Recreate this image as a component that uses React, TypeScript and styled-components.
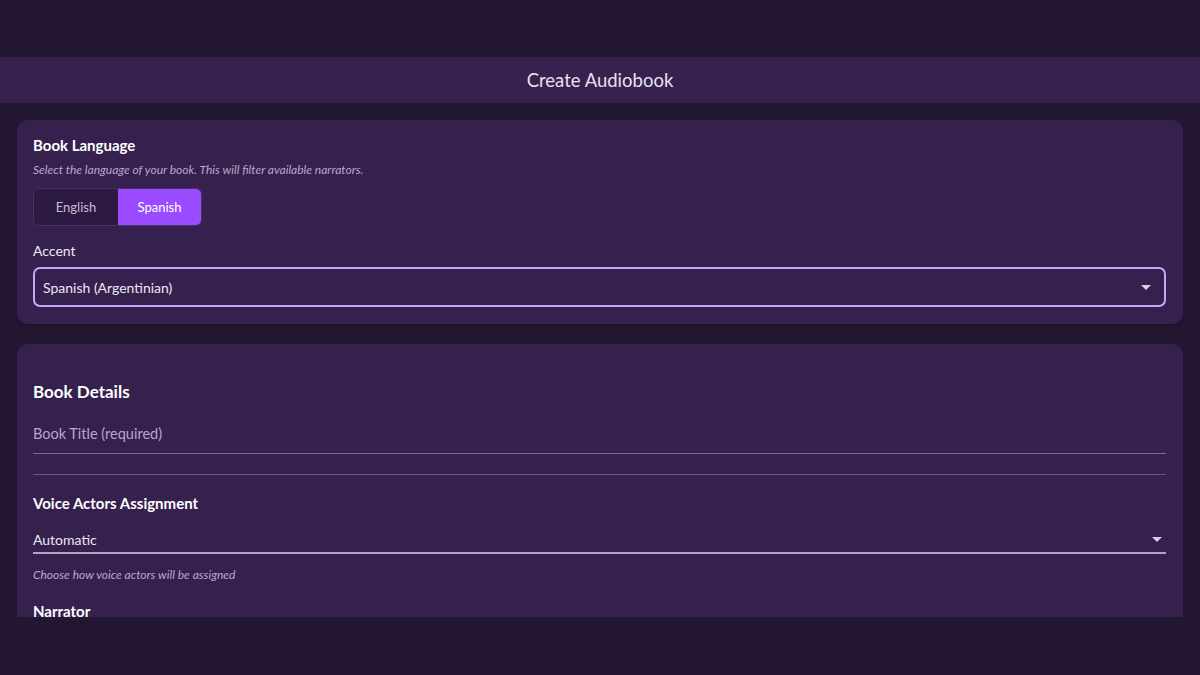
import React from 'react';
import styled, { createGlobalStyle } from 'styled-components';

const GlobalStyle = createGlobalStyle`
  html, body {
    margin: 0;
    padding: 0;
    background: #221631;
    font-family: Lato, "Open Sans", sans-serif;
    color: #f1eaf8;
  }
`;

const Page = styled.div`
  height: 675px;
  padding: 57px 0 58px;
  box-sizing: border-box;
`;

const Frame = styled.div`
  height: 560px;
  overflow: hidden;
  display: flex;
  flex-direction: column;
`;

const TopBar = styled.header`
  flex: 0 0 46px;
  display: flex;
  align-items: center;
  justify-content: center;
  background: #37214f;
  font-size: 18.5px;
  color: #e9e0f2;
`;

const Content = styled.div`
  padding: 17px 17px;
  display: flex;
  flex-direction: column;
  gap: 20px;
`;

const Card = styled.section<{ $top?: number }>`
  background: #36204e;
  border-radius: 10px;
  padding: ${(p) => p.$top ?? 16}px 17px 17px 16px;
  box-shadow: 0 1px 3px rgba(0, 0, 0, 0.25);
`;

const Title = styled.h2<{ $size?: number; $mt?: number }>`
  margin: ${(p) => p.$mt ?? 0}px 0 0;
  font-size: ${(p) => p.$size ?? 15}px;
  font-weight: 700;
  color: #ffffff;
  line-height: 1.2;
`;

const Hint = styled.p<{ $mt?: number }>`
  margin: ${(p) => p.$mt ?? 8}px 0 0;
  font-size: 12px;
  font-style: italic;
  color: #b9a9c9;
`;

const Toggle = styled.div`
  display: inline-flex;
  margin-top: 11px;
  border: 1px solid #48335f;
  border-radius: 6px;
  overflow: hidden;
  height: 38px;
  box-sizing: border-box;
`;

const ToggleButton = styled.button<{ $active?: boolean; $w: number }>`
  width: ${(p) => p.$w}px;
  border: none;
  font-family: inherit;
  font-size: 13px;
  background: ${(p) => (p.$active ? '#9a4bff' : '#2c1a42')};
  color: ${(p) => (p.$active ? '#ffffff' : '#cbbdd8')};
  font-weight: 400;
`;

const Label = styled.div`
  margin-top: 16px;
  font-size: 14px;
  color: #f1eaf8;
`;

const OutlinedSelect = styled.div`
  margin-top: 8px;
  height: 40px;
  box-sizing: border-box;
  border: 2px solid #c5a9f6;
  border-radius: 7px;
  display: flex;
  align-items: center;
  justify-content: space-between;
  padding: 0 13px 0 8px;
  font-size: 14px;
  color: #eee6f6;
`;

const Caret = styled.span`
  width: 0;
  height: 0;
  border-left: 5px solid transparent;
  border-right: 5px solid transparent;
  border-top: 5px solid #d8d0e0;
`;

const TextField = styled.div`
  margin-top: 23px;
  padding-bottom: 11px;
  border-bottom: 1px solid #7d6a93;
  font-size: 14.5px;
  color: #b8a8c8;
`;

const Divider = styled.hr`
  margin: 20px 0 19px;
  border: none;
  border-top: 1px solid #6a5780;
`;

const UnderlineSelect = styled.div`
  margin-top: 19px;
  padding-bottom: 4px;
  border-bottom: 2px solid #b0a4c0;
  display: flex;
  align-items: center;
  justify-content: space-between;
  padding-right: 4px;
  font-size: 14px;
  color: #eee6f6;
`;

export default function App() {
  return (
    <>
      <GlobalStyle />
      <Page>
        <Frame>
          <TopBar>Create Audiobook</TopBar>
          <Content>
            <Card>
              <Title>Book Language</Title>
              <Hint>Select the language of your book. This will filter available narrators.</Hint>
              <Toggle>
                <ToggleButton $w={84}>English</ToggleButton>
                <ToggleButton $w={83} $active>Spanish</ToggleButton>
              </Toggle>
              <Label>Accent</Label>
              <OutlinedSelect>
                <span>Spanish (Argentinian)</span>
                <Caret />
              </OutlinedSelect>
            </Card>
            <Card $top={38}>
              <Title $size={17}>Book Details</Title>
              <TextField>Book Title (required)</TextField>
              <Divider />
              <Title>Voice Actors Assignment</Title>
              <UnderlineSelect>
                <span>Automatic</span>
                <Caret />
              </UnderlineSelect>
              <Hint $mt={13}>Choose how voice actors will be assigned</Hint>
              <Title $mt={20}>Narrator</Title>
            </Card>
          </Content>
        </Frame>
      </Page>
    </>
  );
}
